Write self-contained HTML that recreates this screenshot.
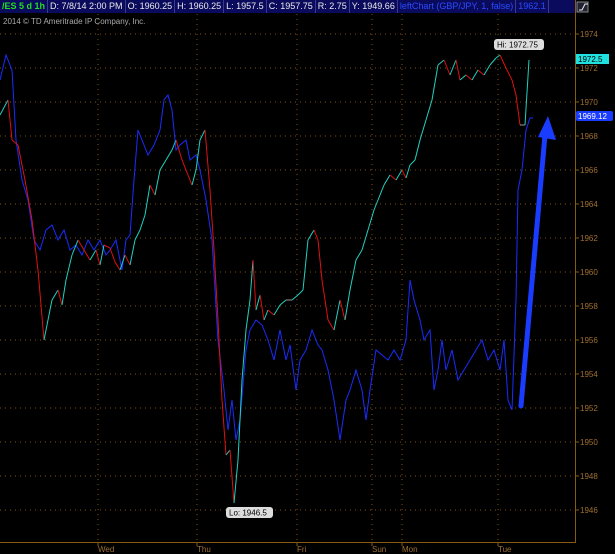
<!DOCTYPE html>
<html><head><meta charset="utf-8"><style>
body{margin:0;background:#000;width:615px;height:554px;overflow:hidden;font-family:"Liberation Sans",sans-serif}
.hdr{position:absolute;left:0;top:0;width:575px;height:13px;background:#0b0b5e;display:flex;font-size:9px;color:#e8e8e8;line-height:13px}
.hdr div{border-right:1px solid #3a3a90;padding:0 2px;white-space:nowrap}
</style></head><body>
<div class="hdr">
<div style="color:#22dd22;font-weight:bold">/ES 5 d 1h</div>
<div>D: 7/8/14 2:00 PM</div><div>O: 1960.25</div><div>H: 1960.25</div><div>L: 1957.5</div><div>C: 1957.75</div><div>R: 2.75</div><div>Y: 1949.66</div>
<div style="color:#2a4cff">leftChart (GBP/JPY, 1, false)</div><div style="color:#2a4cff;width:28px">1962.1</div>
</div>
<svg id="s" width="615" height="554" style="position:absolute;left:0;top:0" font-family="Liberation Sans" font-size="8">
<text x="3" y="24" fill="#aaa" font-size="8">2014 © TD Ameritrade IP Company, Inc.</text>
<rect x="577" y="2" width="11" height="10" fill="#223" stroke="#888"/>
<path d="M579 10h3l3-6h3" stroke="#eee" fill="none"/>
<line x1="575.5" y1="0" x2="575.5" y2="543" stroke="#8a5a10"/>
<line x1="0" y1="542.5" x2="576" y2="542.5" stroke="#8a5a10"/>
<g id="g"></g>
</svg>
<script>
var s=document.getElementById('g'),h='';
for(var k=0;k<=14;k++){var y=34+34*k;h+='<line x1="0" y1="'+y+'" x2="575" y2="'+y+'" stroke="#7a5010" stroke-dasharray="1,4"/><line x1="575" y1="'+y+'" x2="579" y2="'+y+'" stroke="#8a5a10"/><text x="580" y="'+(y+3)+'" fill="#a07030">'+(1974-2*k)+'</text>';}
var vx=[98,197,297,372,402,498],vl=['Wed','Thu','Fri','Sun','Mon','Tue'];
vx.forEach(function(x,i){h+='<line x1="'+x+'" y1="14" x2="'+x+'" y2="542" stroke="#7a5010" stroke-dasharray="1,4"/><line x1="'+x+'" y1="542" x2="'+x+'" y2="546" stroke="#8a5a10"/><text x="'+x+'" y="552" fill="#a07030">'+vl[i]+'</text>';});
var P=[0,115,8,100,12,140,18,145,25,180,32,220,38,270,44,340,48,320,52,300,58,290,62,305,66,280,72,255,78,240,84,250,90,260,96,250,100,265,104,245,110,248,115,262,120,270,125,255,130,265,135,240,140,230,145,215,150,185,155,195,160,170,166,160,172,150,176,140,182,160,188,175,192,185,196,170,200,140,205,130,210,190,214,250,218,320,222,400,226,455,230,450,234,503,238,460,242,380,246,330,250,300,253,260,256,310,260,295,264,320,268,310,274,315,280,305,286,300,292,300,298,295,303,290,308,240,314,230,318,240,322,280,328,320,334,330,340,300,345,320,350,290,356,260,362,250,368,230,374,210,378,200,384,185,390,175,396,180,402,170,406,178,410,165,415,160,420,140,426,120,432,100,438,65,444,60,450,75,456,60,460,80,466,75,472,80,478,70,484,75,490,65,496,58,500,55,506,68,512,80,516,95,520,125,525,125,529,60];
var B=[0,80,6,55,12,70,16,140,22,180,28,200,34,240,40,250,46,230,52,225,58,240,64,230,70,250,76,245,82,255,88,240,94,250,100,240,106,255,110,250,116,240,122,270,126,240,130,235,134,180,138,130,142,140,148,155,154,145,160,130,164,100,168,95,172,110,176,150,180,145,186,140,190,160,196,155,200,170,206,200,212,240,218,340,224,390,228,430,232,400,236,440,240,420,246,350,250,330,256,320,262,325,268,340,274,360,280,330,286,360,290,345,296,390,300,360,306,350,312,330,318,345,322,350,328,370,334,400,340,440,346,400,350,390,356,370,362,390,366,420,370,390,376,350,382,355,388,360,394,350,400,360,406,340,410,280,414,300,420,320,424,340,430,330,434,390,438,370,442,340,446,370,452,350,458,380,464,370,470,360,476,350,482,340,488,360,494,350,500,370,504,340,508,400,512,410,516,300,518,190,522,170,526,130,530,118,533,118];
var pts=[];for(var i=0;i<B.length;i+=2)pts.push(B[i]+','+B[i+1]);
h+='<polyline points="'+pts.join(' ')+'" fill="none" stroke="#1a2cff" stroke-width="1"/>';
for(var i=0;i<P.length-2;i+=2){var c=P[i+3]>P[i+1]?'#e01010':(P[i+3]<P[i+1]?'#20d0c0':'#999');h+='<line x1="'+P[i]+'" y1="'+P[i+1]+'" x2="'+P[i+2]+'" y2="'+P[i+3]+'" stroke="'+c+'"/>';}
h+='<line x1="521" y1="406" x2="545" y2="135" stroke="#1a3cff" stroke-width="5" stroke-linecap="round"/><polygon points="548,116 556,140 538,137" fill="#1a3cff"/>';
h+='<rect x="494" y="39" width="50" height="11" rx="3" fill="#ddd"/><text x="497" y="47.5" fill="#000">Hi: 1972.75</text>';
h+='<rect x="226" y="507" width="47" height="11" rx="3" fill="#ddd"/><text x="229" y="515.5" fill="#000">Lo: 1946.5</text>';
h+='<rect x="576" y="54" width="33" height="10" fill="#20e0e0"/><text x="578" y="62" fill="#000">1972.5</text>';
h+='<rect x="576" y="111" width="37" height="10" rx="2" fill="#1a3cff"/><text x="578" y="119" fill="#fff">1969.12</text>';
s.innerHTML=h;
</script>
</body></html>
